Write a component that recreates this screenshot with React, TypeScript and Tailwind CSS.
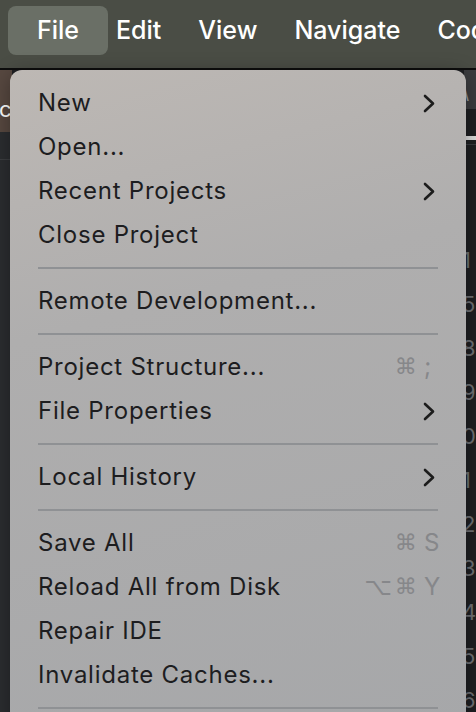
import React from "react";

type Item =
  | { type: "item"; label: string; sub?: boolean; keys?: string[] }
  | { type: "sep" };

const items: Item[] = [
  { type: "item", label: "New", sub: true },
  { type: "item", label: "Open..." },
  { type: "item", label: "Recent Projects", sub: true },
  { type: "item", label: "Close Project" },
  { type: "sep" },
  { type: "item", label: "Remote Development..." },
  { type: "sep" },
  { type: "item", label: "Project Structure...", keys: ["", "⌘", ";"] },
  { type: "item", label: "File Properties", sub: true },
  { type: "sep" },
  { type: "item", label: "Local History", sub: true },
  { type: "sep" },
  { type: "item", label: "Save All", keys: ["", "⌘", "S"] },
  { type: "item", label: "Reload All from Disk", keys: ["⌥", "⌘", "Y"] },
  { type: "item", label: "Repair IDE" },
  { type: "item", label: "Invalidate Caches..." },
  { type: "sep" },
];

function Chevron() {
  return (
    <svg width="12" height="19" viewBox="0 0 12 19" fill="none" className="shrink-0">
      <polyline
        points="2,2 10,9.5 2,17"
        stroke="#1c1c1c"
        strokeWidth="2.6"
        strokeLinecap="round"
        strokeLinejoin="round"
      />
    </svg>
  );
}

function Shortcut({ keys }: { keys: string[] }) {
  return (
    <div className="flex items-center text-[24px] text-[#86878a] leading-none shrink-0">
      <span className="w-[21px] flex justify-center" style={{ fontFamily: "'DejaVu Sans', sans-serif" }}>
        {keys[0]}
      </span>
      <span className="w-[20px] ml-[7px] flex justify-center text-[22px]" style={{ fontFamily: "'DejaVu Sans', sans-serif" }}>
        {keys[1]}
      </span>
      <span className="w-[16px] ml-[8px]">{keys[2]}</span>
    </div>
  );
}

const lineNums = ["1", "5", "8", "9", "0", "1", "2", "3", "4", "5", "6"];

export default function App() {
  return (
    <div
      className="relative w-[476px] h-[712px] overflow-hidden bg-[#1e1f22]"
      style={{ fontFamily: "Inter, 'Noto Sans', sans-serif" }}
    >
      {/* macOS menu bar */}
      <div className="h-[68px] bg-[#4a4d45] flex items-start pt-[6px] pl-[8px] text-white text-[25px] font-medium whitespace-nowrap">
        <div className="w-[100px] h-[49px] shrink-0 rounded-[8px] bg-[#6a6f66] flex items-center justify-center">
          File
        </div>
        <div className="h-[49px] flex items-center ml-[8px] gap-[37px] shrink-0">
          <span>Edit</span>
          <span>View</span>
          <span>Navigate</span>
          <span>Code</span>
        </div>
      </div>
      <div className="h-[2px] bg-[#0d0d0d]" />

      {/* IDE background */}
      <div className="flex h-[642px]">
        <div className="w-[12px] flex flex-col">
          <div className="h-[62px] bg-[#574840] flex items-end pb-[6px] text-white text-[22px] overflow-hidden">
            <span className="-ml-[8px]">tc</span>
          </div>
          <div className="h-[28px] bg-[#2b2d30] border-b border-[#3c3e41]" />
          <div className="flex-1 bg-[#2b2d30]" />
        </div>
        <div className="flex-1" />
        <div className="w-[12px] flex flex-col">
          <div className="h-[40px] bg-[#3b3c3f] flex items-end pb-[2px] text-[#9a9a9c] text-[20px] overflow-hidden">
            <span className="-ml-[2px]">\</span>
          </div>
          <div className="h-[36px] bg-[#1e1f22] flex items-end pb-[4px] overflow-hidden">
            <div className="w-[10px] h-[4px] bg-[#dcdcdc] ml-[2px]" />
          </div>
          <div className="border-t border-[#393b40]" />
          <div className="flex flex-col pt-[93px] text-[#6e7074] text-[22px] leading-[44px] overflow-hidden">
            {lineNums.map((n, i) => (
              <span key={i} className="-ml-[2px]">
                {n}
              </span>
            ))}
          </div>
        </div>
      </div>

      {/* Dropdown menu */}
      <div className="absolute left-[10px] top-[70px] w-[456px] h-[660px] rounded-t-[12px] bg-[linear-gradient(165deg,#bdb8b4_0%,#afaeae_35%,#a6a7a9_100%)] shadow-[0_4px_20px_rgba(0,0,0,0.35)] pt-[11px]">
        {items.map((it, i) =>
          it.type === "sep" ? (
            <div key={i} className="py-[10px] mx-[28px]">
              <div className="h-[2px] bg-[#8f9194]" />
            </div>
          ) : (
            <div
              key={i}
              className="h-[44px] flex items-center justify-between pl-[28px] text-[24px] tracking-[0.75px] text-[#1d1d1f]"
              style={{ paddingRight: it.sub ? 31 : 26 }}
            >
              <span className="whitespace-nowrap">{it.label}</span>
              {it.sub && <Chevron />}
              {it.keys && <Shortcut keys={it.keys} />}
            </div>
          )
        )}
      </div>
    </div>
  );
}
